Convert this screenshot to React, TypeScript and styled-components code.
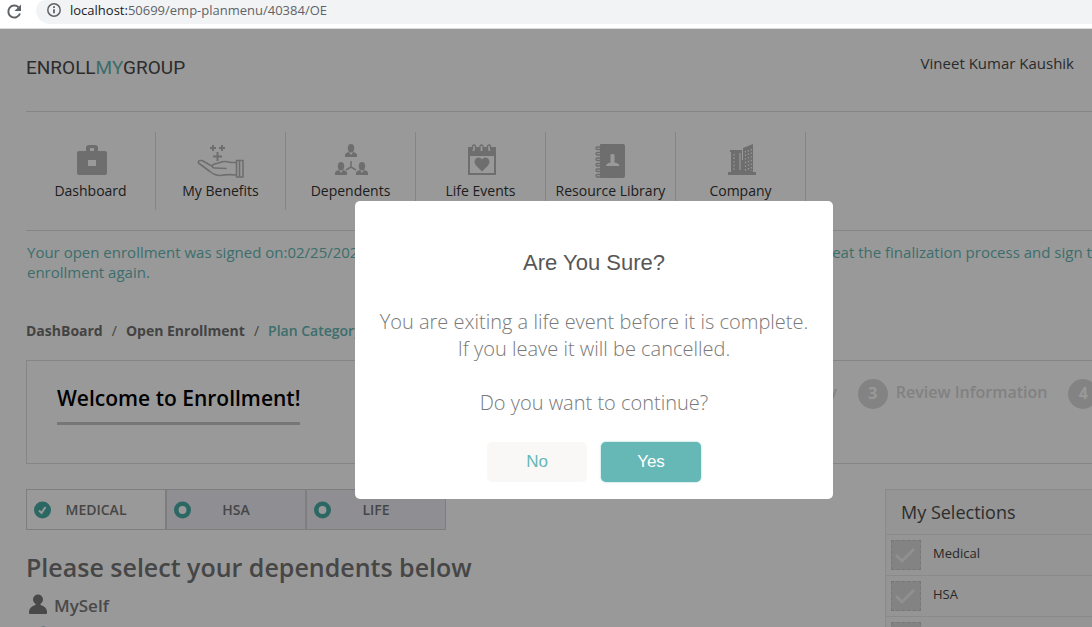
import React from "react";
import styled, { createGlobalStyle } from "styled-components";

const teal = "#65b8b5";
const tealDark = "#49ada6";
const line = "#dedede";

const GlobalStyle = createGlobalStyle`
  *, *::before, *::after { box-sizing: border-box; }
  html, body { margin: 0; overflow: hidden; }
  body {
    background: #fff;
    color: #333;
    font-family: "Open Sans", "Noto Sans", sans-serif;
  }
  button { font: inherit; color: inherit; cursor: pointer; }
  h1, h2, h3, p, ul, ol { margin: 0; padding: 0; }
  ul, ol { list-style: none; }
  a { color: inherit; text-decoration: none; }
  svg { display: block; flex: none; }
`;

const Shell = styled.div`
  display: flex;
  flex-direction: column;
  height: 100vh;
  overflow: hidden;
`;

/* Browser bar */
const BrowserBar = styled.div`
  flex: none;
  display: flex;
  align-items: flex-start;
  height: 29px;
  padding-left: 6px;
  border-bottom: 1px solid #d9dbdd;
`;

const ReloadButton = styled.button`
  width: 30px;
  height: 22px;
  padding: 2px 0 0;
  border: 0;
  background: none;
`;

const AddressPill = styled.div`
  flex: 1;
  display: flex;
  align-items: center;
  gap: 8px;
  height: 24px;
  padding: 0 0 4px 10px;
  border-bottom-left-radius: 14px;
  border-top-left-radius: 10px;
  background: #f1f3f4;
  color: #5f6368;
  font-size: 13px;
  line-height: 20px;
`;

const Host = styled.span`
  color: #202124;
`;

/* Page */
const Page = styled.div`
  position: relative;
  flex: 1;
  min-width: 1188px;
  overflow: hidden;
`;

const Content = styled.div`
  padding: 0 26px;
`;

const Header = styled.header`
  display: flex;
  justify-content: space-between;
  height: 83px;
  padding: 23px 88px 0 0;
  border-bottom: 1px solid ${line};
`;

const Logo = styled.a`
  padding-top: 5px;
  color: #4a4a4a;
  font-family: Roboto, Arial, sans-serif;
  font-size: 19px;
  line-height: 22px;
`;

const LogoAccent = styled.span`
  color: ${teal};
`;

const UserName = styled.span`
  font-size: 15px;
  line-height: 22px;
  color: #484848;
`;

const Nav = styled.nav`
  display: flex;
  height: 119px;
  padding: 20px 0;
  border-bottom: 1px solid ${line};
`;

const NavItem = styled.a`
  display: flex;
  flex-direction: column;
  align-items: center;
  width: 130px;
  height: 78px;
  padding-top: 10px;
  border-right: 1px solid ${line};
  color: #333;
  font-size: 14px;
  line-height: 22px;
  white-space: nowrap;
`;

const NavIcon = styled.svg`
  width: 50px;
  height: 38px;
  color: #b8b8b8;
`;

const Notice = styled.p`
  padding: 11px 0 0 1px;
  color: ${teal};
  font-size: 15px;
  line-height: 20px;
`;

const Breadcrumbs = styled.nav`
  display: flex;
  gap: 9px;
  padding-top: 39px;
  color: #707070;
  font-size: 14px;
  font-weight: 700;
  line-height: 20px;
`;

const Slash = styled.span`
  font-weight: 400;
`;

const CurrentCrumb = styled.span`
  color: ${teal};
  font-weight: 600;
`;

const Card = styled.section`
  display: flex;
  justify-content: space-between;
  height: 104px;
  margin-top: 19px;
  padding: 18px 9px 0 30px;
  border: 1px solid ${line};
`;

const Welcome = styled.h1`
  align-self: flex-start;
  margin-top: 4px;
  padding-bottom: 9px;
  border-bottom: 3px solid #c5c7c5;
  color: #000;
  font-size: 21px;
  font-weight: 600;
  line-height: 30px;
`;

const Steps = styled.ol`
  display: flex;
  gap: 21px;
`;

const Step = styled.li`
  display: flex;
  gap: 8px;
  color: #d8d8d8;
  font-size: 16px;
  font-weight: 600;
  line-height: 26px;
`;

const StepNumber = styled.span`
  width: 30px;
  height: 30px;
  border-radius: 50%;
  background: #dadada;
  color: #fff;
  font-weight: 700;
  line-height: 28px;
  text-align: center;
`;

const Columns = styled.div`
  display: grid;
  grid-template-columns: 1fr 277px;
  margin-top: 25px;
`;

const Tabs = styled.div`
  display: flex;
`;

const Tab = styled.button<{ $active?: boolean }>`
  display: flex;
  align-items: center;
  width: 140px;
  height: 41px;
  padding: 0 24px 0 7px;
  border: 1px solid #d3d3d3;
  background: ${(p) => (p.$active ? "#fff" : "#efedf5")};
  color: #757575;
  font-size: 14px;
  font-weight: 600;
`;

const TabLabel = styled.span`
  flex: 1;
  text-align: center;
`;

const SectionTitle = styled.h2`
  margin-top: 19px;
  color: #757575;
  font-size: 25px;
  font-weight: 600;
  line-height: 36px;
`;

const Person = styled.div`
  display: flex;
  align-items: center;
  gap: 6px;
  height: 40px;
  padding-left: 3px;
  color: #7a7a7a;
  font-size: 17px;
  font-weight: 600;
`;

const AddedMark = styled.div`
  padding: 1px 0 0 9px;
`;

const Selections = styled.aside`
  border: 1px solid #e6e6e6;
  background: #f8f8f8;
`;

const SelectionsTitle = styled.h3`
  height: 44px;
  padding-left: 15px;
  color: #4c4c4c;
  font-size: 18px;
  font-weight: 400;
  line-height: 44px;
`;

const SelectionRow = styled.li`
  display: flex;
  gap: 12px;
  height: 41px;
  padding: 5px 5px 0;
  border-top: 1px solid #e6e6e6;
  color: #444;
  font-size: 13px;
  line-height: 26px;
`;

const SelectionMark = styled.span`
  display: grid;
  place-items: center;
  width: 30px;
  height: 30px;
  border: 1px dashed #c6c6c6;
  background: #dadada;
`;

/* Dialog */
const Overlay = styled.div`
  position: absolute;
  inset: 0;
  display: flex;
  justify-content: center;
  align-items: flex-start;
  padding-top: 172px;
  background: rgba(0, 0, 0, 0.4);
`;

const Dialog = styled.div`
  width: 478px;
  padding: 47px 17px 17px;
  border-radius: 5px;
  background: #fff;
  text-align: center;
`;

const DialogTitle = styled.h2`
  color: #575757;
  font-family: "Liberation Sans", Arial, sans-serif;
  font-size: 22px;
  font-weight: 400;
  line-height: 30px;
`;

const DialogText = styled.p`
  margin-top: 30px;
  color: #797979;
  font-size: 20px;
  font-weight: 300;
  line-height: 27px;
`;

const DialogActions = styled.div`
  display: flex;
  justify-content: center;
  gap: 14px;
  margin-top: 26px;
`;

const DialogButton = styled.button<{ $primary?: boolean }>`
  width: 100px;
  height: 40px;
  padding: 0;
  border: 0;
  border-radius: 5px;
  background: ${(p) => (p.$primary ? "#65b8b6" : "#f9f8f7")};
  box-shadow: ${(p) => (p.$primary ? "0 0 2px rgba(101, 184, 182, 0.8)" : "none")};
  color: ${(p) => (p.$primary ? "#fff" : "#65b8b6")};
  font-family: "Liberation Sans", Arial, sans-serif;
  font-size: 17px;
`;

const BriefcaseIcon = () => (
  <NavIcon viewBox="1 0 50 38">
    <path
      fill="currentColor"
      fillRule="evenodd"
      d="M14 9h7V6q0-3 3-3h6q3 0 3 3v3h7q2 0 2 2v20q0 2-2 2H14q-2 0-2-2V11q0-2 2-2zM25 6v3h4V6zM23 18v6h8v-6z"
    />
  </NavIcon>
);

const HandIcon = () => (
  <NavIcon viewBox="1 0 50 38" fill="none" stroke="currentColor">
    <path strokeWidth="2" d="M18 3v6M15 6h6M27 3v6M24 6h6M22.500 10v9M18 14.500h9" />
    <path
      strokeWidth="1.600"
      strokeLinejoin="round"
      strokeLinecap="round"
      d="M41 20.500H36Q29 18.500 25 20.500L18 22.500Q16 26 20 26L31 26.500M17.500 24.500L7 18.500Q2.500 18 3.500 21L15 29.500Q20 33.500 25 33.500Q33 32 41 33M41.500 18.500h6.500v16.500h-6.500zM44.500 19v16"
    />
  </NavIcon>
);

const Bust = ({ x, y }: { x: number; y: number }) => (
  <g transform={`translate(${x} ${y})`}>
    <ellipse cx="6" cy="4.200" rx="3.200" ry="4.200" />
    <path d="M0 13v-2q0-2 4-3l2 3 2-3q4 1 4 3v2z" />
  </g>
);

const PeopleIcon = () => (
  <NavIcon viewBox="1 0 50 38" fill="currentColor">
    <Bust x={20} y={2} />
    <Bust x={10} y={20} />
    <Bust x={31} y={20} />
    <path fill="none" stroke="currentColor" strokeWidth="1.500" d="M26 19v6l-5 3M26 25l5 3" />
  </NavIcon>
);

const CalendarHeartIcon = () => (
  <NavIcon viewBox="0 0 50 38">
    <path
      fill="currentColor"
      fillRule="evenodd"
      d="M14 5h2v3q1.500 2 3 0V5h5v3q1.500 2 3 0V5h5v3q1.500 2 3 0V5h5v28H12V5zM14 14v17h24V14z"
    />
    <path fill="none" stroke="currentColor" strokeWidth="1.300" d="M16.500 8V4q1.500-2 3 0v4M24 8V4q1.500-2 3 0v4M31.500 8V4q1.500-2 3 0v4" />
    <path fill="currentColor" d="M26 29.500l-6-6q-3-4 0-7 3.500-2.500 6 1 2.500-3.500 6-1 3 3 0 7z" />
  </NavIcon>
);

const AddressBookIcon = () => (
  <NavIcon viewBox="1 0 50 38">
    <path
      fill="currentColor"
      fillRule="evenodd"
      d="M16 2h22q2 0 2 2v30q0 2-2 2H16q-1 0-1-1V3q0-1 1-1zM25.500 12.500q2-1 4 0v8q5 1 5 3.500H21q0-2.500 4.500-3.500z"
    />
    <g fill="none" stroke="currentColor" strokeWidth="1.300">
      {[5, 10.5, 16, 21.500, 27, 32.500].map((y) => (
        <rect key={y} x="11" y={y} width="5" height="2.500" rx="1.200" />
      ))}
    </g>
  </NavIcon>
);

const BuildingIcon = () => (
  <NavIcon viewBox="-1 0 50 38">
    <path fill="currentColor" d="M12 30h2V10h-1V8h12v10h1V6l10-4v28h3v3H11v-3z" />
    <g stroke="#fff" strokeWidth="1.200">
      <path strokeDasharray="1.400 2.200" d="M17 12v18M28.500 9v20M31.500 8v21M34.300 7v22" />
      <path d="M23 11v17" />
    </g>
  </NavIcon>
);

const DoneIcon = () => (
  <svg width="17" height="18" viewBox="0 0 17 18">
    <circle cx="8.500" cy="9" r="8.500" fill={tealDark} />
    <path fill="none" stroke="#fff" strokeWidth="2" d="M5 9.500l2.500 2.500 4-6" />
  </svg>
);

const OpenIcon = () => (
  <svg width="17" height="18" viewBox="0 0 17 18">
    <circle cx="8.500" cy="9" r="6.200" fill="#fff" stroke={tealDark} strokeWidth="4.600" />
  </svg>
);

const navItems = [
  { label: "Dashboard", Icon: BriefcaseIcon },
  { label: "My Benefits", Icon: HandIcon },
  { label: "Dependents", Icon: PeopleIcon },
  { label: "Life Events", Icon: CalendarHeartIcon },
  { label: "Resource Library", Icon: AddressBookIcon },
  { label: "Company", Icon: BuildingIcon },
];

const steps = [
  { number: 2, label: "Plan Category" },
  { number: 3, label: "Review Information" },
  { number: 4, label: "Finish" },
];

const tabs = [
  { label: "MEDICAL", done: true },
  { label: "HSA", done: false },
  { label: "LIFE", done: false },
];

const selections = ["Medical", "HSA", "Life"];

export default function App() {
  return (
    <Shell>
      <GlobalStyle />
      <BrowserBar>
        <ReloadButton aria-label="Reload">
          <svg width="16" height="16" viewBox="0 0 16 16" fill="none" stroke="#5f6368" strokeWidth="2">
            <path d="M12.500 3.200A6 6 0 1 0 14 9.500" />
            <path fill="#5f6368" stroke="none" d="M15 .500v6.500H8.500z" />
          </svg>
        </ReloadButton>
        <AddressPill>
          <svg width="16" height="16" viewBox="0 0 16 16" fill="none" stroke="#5f6368" strokeWidth="1.500">
            <circle cx="8" cy="8" r="6.200" />
            <path strokeWidth="1.800" d="M8 7.200v4M8 4.300v1.700" />
          </svg>
          <span>
            <Host>localhost:</Host>50699/emp-planmenu/40384/OE
          </span>
        </AddressPill>
      </BrowserBar>

      <Page>
        <Content>
          <Header>
            <Logo href="#">
              ENROLL<LogoAccent>MY</LogoAccent>GROUP
            </Logo>
            <UserName>Vineet Kumar Kaushik</UserName>
          </Header>

          <Nav>
            {navItems.map(({ label, Icon }) => (
              <NavItem href="#" key={label}>
                <Icon />
                {label}
              </NavItem>
            ))}
          </Nav>

          <Notice>
            Your open enrollment was signed on:02/25/2020. If you make any changes to your benefit plans, you must
            then repeat the finalization process and sign the enrollment again.
          </Notice>

          <Breadcrumbs>
            <a href="#">DashBoard</a>
            <Slash>/</Slash>
            <a href="#">Open Enrollment</a>
            <Slash>/</Slash>
            <CurrentCrumb>Plan Category</CurrentCrumb>
          </Breadcrumbs>

          <Card>
            <Welcome>Welcome to Enrollment!</Welcome>
            <Steps>
              {steps.map(({ number, label }) => (
                <Step key={number}>
                  <StepNumber>{number}</StepNumber>
                  {label}
                </Step>
              ))}
            </Steps>
          </Card>

          <Columns>
            <main>
              <Tabs role="tablist">
                {tabs.map(({ label, done }) => (
                  <Tab key={label} role="tab" aria-selected={done} $active={done}>
                    {done ? <DoneIcon /> : <OpenIcon />}
                    <TabLabel>{label}</TabLabel>
                  </Tab>
                ))}
              </Tabs>
              <SectionTitle>Please select your dependents below</SectionTitle>
              <Person>
                <svg width="19" height="22" viewBox="0 0 19 22" fill="currentColor">
                  <circle cx="9" cy="5.500" r="5" />
                  <path d="M6.500 9h5v2q6 1.500 6.500 6.500V19q0 1-1 1h-16q-1 0-1-1v-1.500Q.500 12.500 6.500 11z" />
                </svg>
                MySelf
              </Person>
              <AddedMark>
                <DoneIcon />
              </AddedMark>
            </main>

            <Selections>
              <SelectionsTitle>My Selections</SelectionsTitle>
              <ul>
                {selections.map((label) => (
                  <SelectionRow key={label}>
                    <SelectionMark>
                      <svg width="22" height="18" viewBox="0 0 22 18" fill="none" stroke="#f0f0f0" strokeWidth="3">
                        <path d="M1 9l6 6L19 3" />
                      </svg>
                    </SelectionMark>
                    {label}
                  </SelectionRow>
                ))}
              </ul>
            </Selections>
          </Columns>
        </Content>

        <Overlay>
          <Dialog role="dialog" aria-modal="true" aria-labelledby="dialog-title">
            <DialogTitle id="dialog-title">Are You Sure?</DialogTitle>
            <DialogText>
              You are exiting a life event before it is complete.
              <br />
              If you leave it will be cancelled.
              <br />
              <br />
              Do you want to continue?
            </DialogText>
            <DialogActions>
              <DialogButton>No</DialogButton>
              <DialogButton $primary>Yes</DialogButton>
            </DialogActions>
          </Dialog>
        </Overlay>
      </Page>
    </Shell>
  );
}
